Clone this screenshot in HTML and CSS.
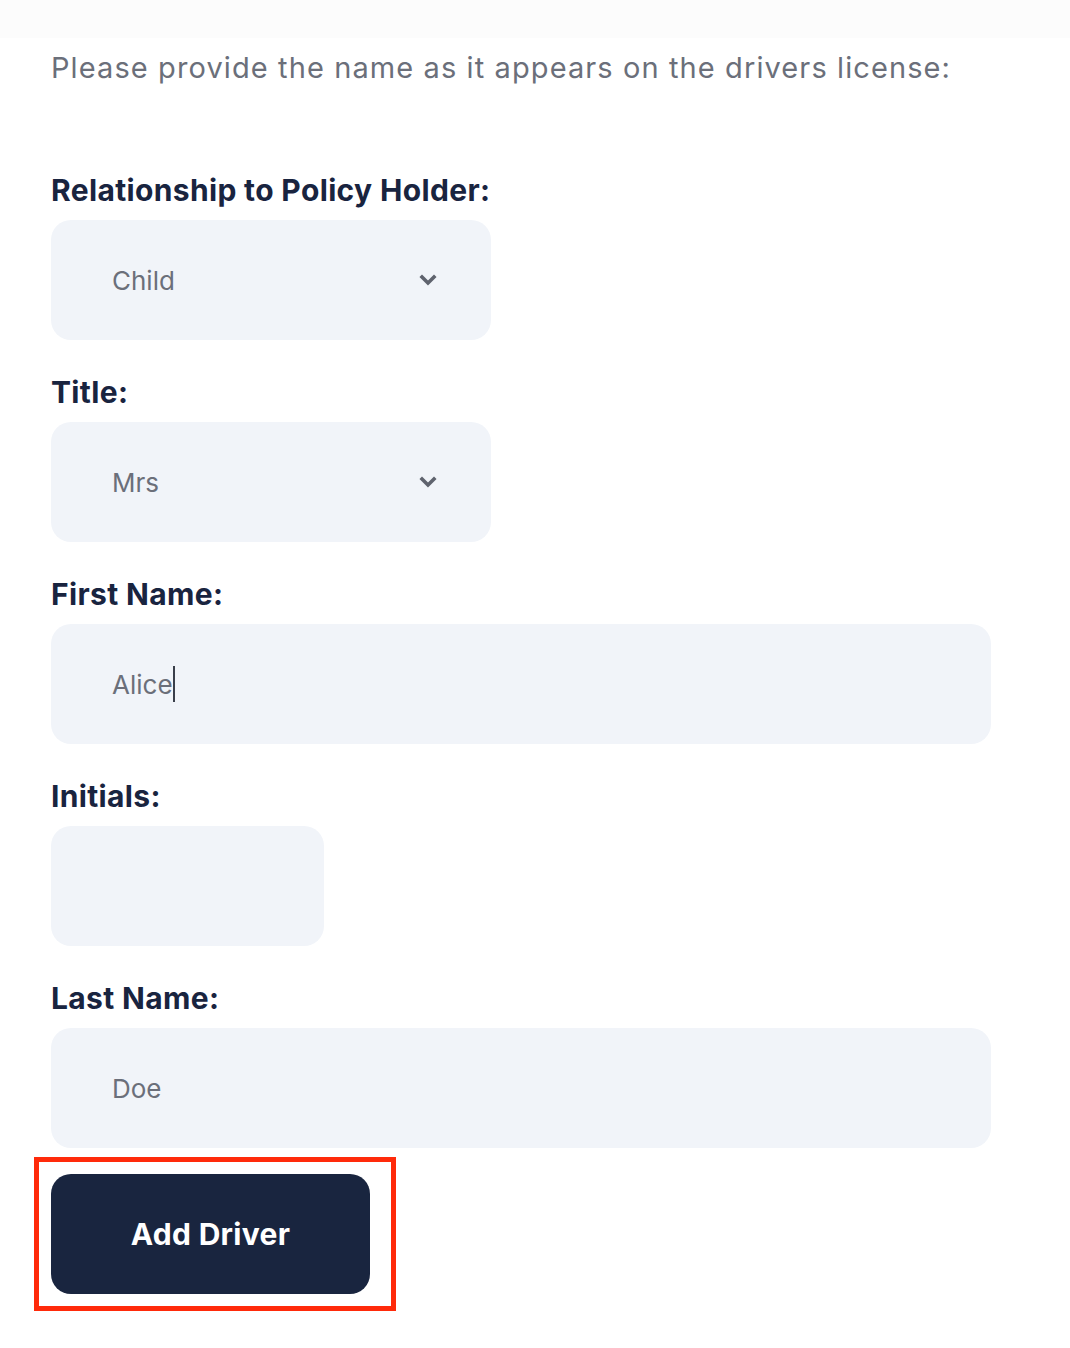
FILE: index.html
```html
<!DOCTYPE html>
<html lang="en">
<head>
<meta charset="utf-8">
<title>Add Driver</title>
<link rel="stylesheet" href="styles.css">
</head>
<body>
<div class="topband"></div>
<main class="form">
  <p class="intro">Please provide the name as it appears on the drivers license:</p>

  <div class="field">
    <label class="label">Relationship to Policy Holder:</label>
    <div class="control select narrow">
      <span class="value">Child</span>
      <svg class="chev" width="18" height="12" viewBox="0 0 18 12"><path d="M3 3 L9 9 L15 3" fill="none" stroke="#5f636e" stroke-width="3.6" stroke-linecap="square" stroke-linejoin="miter"/></svg>
    </div>
  </div>

  <div class="field">
    <label class="label">Title:</label>
    <div class="control select narrow">
      <span class="value">Mrs</span>
      <svg class="chev" width="18" height="12" viewBox="0 0 18 12"><path d="M3 3 L9 9 L15 3" fill="none" stroke="#5f636e" stroke-width="3.6" stroke-linecap="square" stroke-linejoin="miter"/></svg>
    </div>
  </div>

  <div class="field">
    <label class="label">First Name:</label>
    <div class="control wide">
      <span class="value">Alice<span class="caret"></span></span>
    </div>
  </div>

  <div class="field">
    <label class="label">Initials:</label>
    <div class="control small"></div>
  </div>

  <div class="field">
    <label class="label">Last Name:</label>
    <div class="control wide">
      <span class="value">Doe</span>
    </div>
  </div>

  <div class="actions">
    <button class="btn" type="button">Add Driver</button>
  </div>
</main>
</body>
</html>
```

FILE: styles.css
```css
*, *::before, *::after { box-sizing: border-box; }

html, body {
  margin: 0;
  padding: 0;
  background: #ffffff;
  font-family: Inter, "Noto Sans", "Liberation Sans", sans-serif;
}

.topband {
  height: 38px;
  background: #fcfcfc;
}

.form {
  padding-left: 51px;
  padding-bottom: 40px;
  display: flex;
  flex-direction: column;
}

.intro {
  margin: 9px 0 0 0;
  font-size: 29px;
  line-height: 42px;
  color: #6b6f7a;
  letter-spacing: 1.1px;
}

.field {
  display: flex;
  flex-direction: column;
  margin-top: 34px;
}

.field:first-of-type {
  margin-top: 83px;
}

.label {
  font-size: 30px;
  line-height: 36px;
  font-weight: 700;
  color: #19243f;
  letter-spacing: 0.35px;
  margin-bottom: 12px;
}

.control {
  height: 120px;
  background: #f1f4f9;
  border-radius: 20px;
  display: flex;
  align-items: center;
  padding-left: 61px;
  padding-right: 54px;
}

.narrow { width: 440px; }
.wide { width: 940px; }
.small { width: 273px; }

.select { justify-content: space-between; }

.value {
  font-size: 26px;
  color: #6b6f7a;
  display: inline-flex;
  align-items: center;
}

.caret {
  display: inline-block;
  width: 2px;
  height: 36px;
  background: #3a3f4a;
  margin-left: 0;
}

.chev { display: block; }

.actions {
  margin-top: 26px;
  position: relative;
  width: 319px;
}

.actions::before {
  content: "";
  position: absolute;
  left: -17px;
  top: -17px;
  width: 362px;
  height: 154px;
  border: 5px solid #ff2a0a;
  pointer-events: none;
}

.btn {
  display: block;
  width: 319px;
  height: 120px;
  border: none;
  border-radius: 20px;
  background: #19253f;
  color: #ffffff;
  font-family: Inter, "Noto Sans", "Liberation Sans", sans-serif;
  font-size: 30px;
  font-weight: 700;
  letter-spacing: 0.3px;
  cursor: pointer;
}
```
